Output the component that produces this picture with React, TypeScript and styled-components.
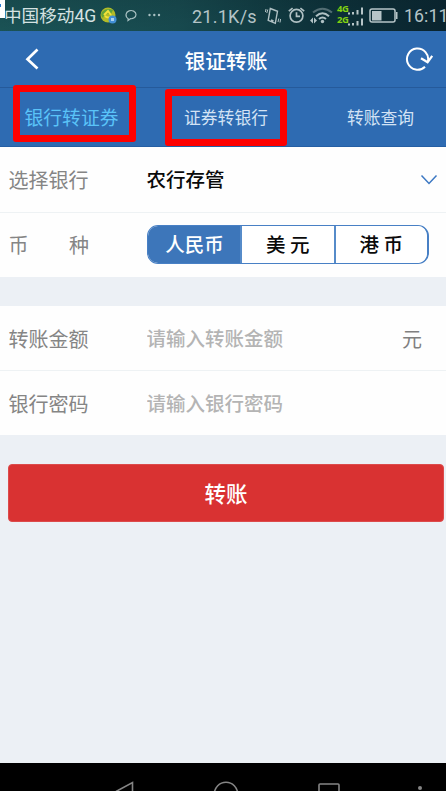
import React from "react";
import styled, { createGlobalStyle } from "styled-components";

const GlobalStyle = createGlobalStyle`
  * { box-sizing: border-box; }
  body {
    margin: 0;
    overflow: hidden;
    font-family: Roboto, "Noto Sans CJK SC", sans-serif;
  }
`;

const Screen = styled.div`
  width: 446px;
  height: 791px;
  display: flex;
  flex-direction: column;
  overflow: hidden;
  background: #ecf0f5;
`;

const StatusBar = styled.div`
  position: relative;
  flex: none;
  height: 31px;
  display: flex;
  align-items: center;
  overflow: hidden;
  white-space: nowrap;
  background: linear-gradient(175deg, rgba(0, 0, 0, 0.12), transparent 60%),
    linear-gradient(90deg, #1b5558 0%, #17494e 40%, #0d3139 72%, #0a242e 100%);
`;

const CornerMark = styled.span`
  position: absolute;
  left: 0;
  top: 0;
  width: 5px;
  height: 18px;
  background: #fff;
  &::after {
    content: "";
    position: absolute;
    left: 0;
    top: 4px;
    width: 1px;
    height: 3px;
    background: #2c7cd0;
  }
`;

const StatusText = styled.span<{ $left: number; $width: number; $size: number; $color?: string; $track?: number }>`
  flex: none;
  margin-left: ${(p) => p.$left}px;
  width: ${(p) => p.$width}px;
  font-size: ${(p) => p.$size}px;
  letter-spacing: ${(p) => p.$track ?? 0}px;
  line-height: 31px;
  padding-top: 1px;
  color: ${(p) => p.$color ?? "#b4c4c7"};
`;

const StatusIcon = styled.svg<{ $left: number }>`
  flex: none;
  margin-left: ${(p) => p.$left}px;
  overflow: visible;
`;

const SimStack = styled.span`
  flex: none;
  width: 13px;
  margin: 0 0 3px 4px;
  display: flex;
  flex-direction: column;
  color: #82d211;
  font: 700 9.5px/11px "Open Sans", sans-serif;
  letter-spacing: -0.5px;
`;

const Header = styled.header`
  flex: none;
  height: 57px;
  display: grid;
  grid-template-columns: 64px 1fr 58px;
  align-items: center;
  background: #2e6bb2;
  border-bottom: 1px solid #255a9b;
`;

const IconButton = styled.button<{ $pad: number }>`
  height: 56px;
  padding: 0 0 0 ${(p) => p.$pad}px;
  border: 0;
  background: none;
  display: flex;
  align-items: center;
`;

const Title = styled.h1`
  margin: 0;
  padding-top: 6px;
  text-align: center;
  font-size: 20.7px;
  font-weight: 500;
  line-height: 50px;
  color: #fff;
`;

const Tabs = styled.nav`
  flex: none;
  height: 59px;
  display: grid;
  grid-template-columns: 143px 166px 1fr;
  background: #2e6bb2;
  border-bottom: 1px solid #255fa4;
`;

const Tab = styled.button<{ $active?: boolean; $shift?: number }>`
  position: relative;
  border: 0;
  padding: ${(p) => (p.$active ? 3 : 0)}px 0 0 ${(p) => p.$shift ?? 0}px;
  background: none;
  font-family: inherit;
  font-size: ${(p) => (p.$active ? 18.8 : 16.8)}px;
  line-height: 56px;
  color: ${(p) => (p.$active ? "#5ac3f8" : "#d3e3f5")};
`;

const Marker = styled.span<{ $left: number; $top: number; $width: number }>`
  position: absolute;
  z-index: 1;
  left: ${(p) => p.$left}px;
  top: ${(p) => p.$top}px;
  width: ${(p) => p.$width}px;
  height: 57px;
  border: 7px solid #fe0000;
  border-radius: 3px;
`;

const Group = styled.section`
  flex: none;
  background: #fefefe;
  margin-bottom: 29px;
`;

const Row = styled.div<{ $height: number; $line?: boolean }>`
  height: ${(p) => p.$height}px;
  display: grid;
  grid-template-columns: 80px 1fr auto;
  column-gap: 58px;
  align-items: center;
  padding-left: 9px;
  ${(p) => p.$line && "border-bottom: 1px solid #eef2f4;"}
`;

const Label = styled.label<{ $raised?: boolean }>`
  display: flex;
  justify-content: space-between;
  margin-left: -0.5px;
  padding-top: ${(p) => (p.$raised ? 1 : 3)}px;
  font-size: 20px;
  line-height: 30px;
  color: #858585;
`;

const Value = styled.span`
  margin-left: -0.5px;
  padding-top: 3px;
  font-size: 19.5px;
  font-weight: 500;
  line-height: 30px;
  color: #0a0a0a;
`;

const Field = styled.input`
  width: 100%;
  min-width: 0;
  margin-left: -0.5px;
  padding: 3px 0 0;
  border: 0;
  outline: 0;
  background: none;
  font: 500 19.5px/30px Roboto, "Noto Sans CJK SC", sans-serif;
  &::placeholder { color: #b4b4b4; opacity: 1; }
`;

const Unit = styled.span`
  padding: 3px 24px 0 0;
  font-size: 20px;
  line-height: 30px;
  color: #808080;
`;

const Chevron = styled.svg`
  margin-right: 8px;
`;

const Segments = styled.div`
  width: 282px;
  height: 39px;
  margin-bottom: 1px;
  display: grid;
  grid-template-columns: 92px 94px 1fr;
  border: 1px solid #4880c5;
  border-right-width: 2px;
  border-radius: 11px;
  overflow: hidden;
`;

const Segment = styled.button<{ $active?: boolean }>`
  padding: 2px 0 0 ${(p) => (p.$active ? 1 : 4)}px;
  border: 0;
  border-left: ${(p) => (p.$active ? "0" : "2px solid #568bc9")};
  background: ${(p) => (p.$active ? "#3d76ba" : "#fff")};
  color: ${(p) => (p.$active ? "#fff" : "#0a0a0a")};
  font: 500 19.5px/35px Roboto, "Noto Sans CJK SC", sans-serif;
  letter-spacing: ${(p) => (p.$active ? 0 : 4.5)}px;
`;

const Submit = styled.button`
  flex: none;
  height: 58px;
  margin: 0 2px 0 8px;
  padding: 3px 0 0;
  border: 1px solid #dc4b4b;
  border-radius: 4px;
  background: #d93232;
  color: #fff;
  font: 500 21.5px/53px Roboto, "Noto Sans CJK SC", sans-serif;
`;

const NavBar = styled.footer`
  flex: none;
  height: 28px;
  margin-top: auto;
  display: flex;
  align-items: flex-start;
  overflow: hidden;
  background: #000;
`;

const NavIcon = styled.svg<{ $left: number }>`
  flex: none;
  margin: 18px 0 0 ${(p) => p.$left}px;
`;

function StatusIcons() {
  return (
    <>
      <StatusIcon $left={3} width="17" height="17" viewBox="0 0 17 17">
        <circle cx="8" cy="8" r="7.5" fill="#b3ba27" />
        <path d="M2 5Q6 0 13 3L11 7L5 6L3 11Q0 8 2 5Z" fill="#62a33a" />
        <path d="M4 8L8 4L11 8M5 9Q8 12 12 9" stroke="#f3e23a" strokeWidth="2" fill="none" />
        <circle cx="12.5" cy="12.5" r="4" fill="#438fd5" />
        <path d="M11 11h3v3h-3z" fill="#a9d1f2" />
      </StatusIcon>
      <StatusIcon $left={8} width="12" height="12" viewBox="0 0 12 12" fill="none" stroke="#a8c0c2" strokeWidth="1.2">
        <path d="M3.2 8.7C-.2 6.5 .6 2.1 4 .9C7 -.3 11 1.5 11 4.5C11 7.5 8 9 5.5 8.7L3 10.5Z" />
      </StatusIcon>
      <StatusIcon $left={11} width="13" height="3" viewBox="0 0 13 3" fill="#a8c0c2">
        <circle cx="1.5" cy="1" r="1.2" /><circle cx="6.3" cy="1" r="1.2" /><circle cx="11" cy="1" r="1.2" />
      </StatusIcon>
    </>
  );
}

function SystemIcons() {
  return (
    <>
      <StatusIcon $left={4} width="16" height="18" viewBox="0 0 16 18" fill="none" stroke="#b0c1c4" strokeWidth="1.4">
        <path d="M5.3 1.5L12.5 4.3L10.3 16.3L3.2 13.3Z M6 13L8.5 14" />
        <path d="M2.8 2.5L1.8 6M1 2L.4 5M13.8 11.5L13 15M15.6 12L15 15.5" strokeWidth="1" />
      </StatusIcon>
      <StatusIcon $left={7} width="17" height="17" viewBox="0 0 17 17" fill="none" stroke="#b0c1c4" strokeWidth="1.7">
        <circle cx="8.5" cy="8.8" r="6.4" />
        <path d="M8.5 5.2V9.3H12M.8 4.1L4.6 1.1M12.4 1.1L16.2 4.1" />
      </StatusIcon>
      <StatusIcon $left={5} width="23" height="17" viewBox="0 0 23 17" fill="none" stroke="#b0c1c4" strokeWidth="2">
        <path d="M3 5.5Q12.5 -2 22 5.5" stroke="#536d73" />
        <path d="M6 9.2Q12.5 3.2 19 9.2M9 12Q12.5 9 16 12" />
        <circle cx="12.5" cy="14.5" r="1.7" fill="#b0c1c4" stroke="none" />
        <path d="M0 13.5L3 10.5V16.5ZM7 13.5L4 10.5V16.5Z" fill="#b0c1c4" stroke="none" />
      </StatusIcon>
      <SimStack><span>4G</span><span>2G</span></SimStack>
      <StatusIcon $left={-2} width="16" height="20" viewBox="0 0 16 20" fill="#b7c5c8">
        <path d="M0 6.5h2v2H0zM4 6h2v2.5H4zM8.5 4h2v4.5h-2zM13 1.5h2v7h-2zM0 17.5h2v2H0zM4 17h2v2.5H4zM8.5 15h2v4.5h-2zM13 12.5h2v7h-2z" />
      </StatusIcon>
      <StatusIcon $left={5} width="29" height="15" viewBox="0 0 29 15">
        <rect x="1" y="1" width="25" height="13" rx="2" fill="none" stroke="#b7c5c8" strokeWidth="1.5" />
        <path d="M3 3h9.5v9.5H3z" fill="#b7c5c8" /><path d="M27 4h1.5v7H27z" fill="#b7c5c8" />
      </StatusIcon>
    </>
  );
}

export default function App() {
  return (
    <>
      <GlobalStyle />
      <Screen>
        <StatusBar>
          <StatusText $left={4} $width={93} $size={17.6} $color="#d5e2e2">中国移动4G</StatusText>
          <StatusIcons />
          <StatusText $left={31} $width={69} $size={18} $track={0.25}>21.1K/s</StatusText>
          <SystemIcons />
          <StatusText $left={6} $width={42} $size={17.7} $track={0.1}>16:11</StatusText>
          <CornerMark />
        </StatusBar>

        <Header>
          <IconButton $pad={25} aria-label="返回">
            <svg width="15" height="22" viewBox="0 0 15 22" fill="none" stroke="#fff" strokeWidth="2.7">
              <path d="M12.5 1.5L2.5 11.2L12.5 20.5" />
            </svg>
          </IconButton>
          <Title>银证转账</Title>
          <IconButton $pad={17} aria-label="刷新">
            <svg width="30" height="26" viewBox="0 0 30 26" fill="none" stroke="#fff" strokeWidth="2">
              <path d="M20 20.7A10.6 10.6 0 1 1 22.9 15.5" />
              <path d="M16 12.2L22.6 16.3L27.2 9.8" strokeWidth="2.2" />
            </svg>
          </IconButton>
        </Header>

        <Tabs>
          <Tab $active>
            银行转证券
            <Marker $left={13} $top={-3} $width={123} />
          </Tab>
          <Tab>
            证券转银行
            <Marker $left={22} $top={1} $width={122} />
          </Tab>
          <Tab $shift={6}>转账查询</Tab>
        </Tabs>

        <Group>
          <Row $height={66} $line>
            <Label>选择银行</Label>
            <Value>农行存管</Value>
            <Chevron width="18" height="12" viewBox="0 0 18 12" fill="none" stroke="#3c78c3" strokeWidth="1.5">
              <path d="M1.5 1.5L9 9.5L16.5 1.5" />
            </Chevron>
          </Row>
          <Row $height={64}>
            <Label $raised><span>币</span><span>种</span></Label>
            <Segments>
              <Segment $active>人民币</Segment>
              <Segment>美元</Segment>
              <Segment>港币</Segment>
            </Segments>
          </Row>
        </Group>

        <Group>
          <Row $height={65} $line>
            <Label htmlFor="amount">转账金额</Label>
            <Field id="amount" placeholder="请输入转账金额" />
            <Unit>元</Unit>
          </Row>
          <Row $height={64}>
            <Label htmlFor="password">银行密码</Label>
            <Field id="password" type="password" placeholder="请输入银行密码" />
          </Row>
        </Group>

        <Submit>转账</Submit>

        <NavBar>
          <NavIcon $left={114} width="21" height="20" viewBox="0 0 21 20" fill="none" stroke="#858585" strokeWidth="1.6">
            <path d="M2 10.5L18.5 1.5V20" />
          </NavIcon>
          <NavIcon $left={78} width="26" height="26" viewBox="0 0 26 26" fill="none" stroke="#858585" strokeWidth="1.6">
            <circle cx="13" cy="13" r="11.7" />
          </NavIcon>
          <NavIcon $left={79} width="22" height="22" viewBox="0 0 22 22" fill="none" stroke="#858585" strokeWidth="1.6">
            <rect x="1" y="3" width="20" height="18" rx="1" />
          </NavIcon>
          <NavIcon $left={77} width="6" height="10" viewBox="0 0 6 10" fill="#858585">
            <circle cx="3" cy="7" r="2" />
          </NavIcon>
        </NavBar>
      </Screen>
    </>
  );
}
